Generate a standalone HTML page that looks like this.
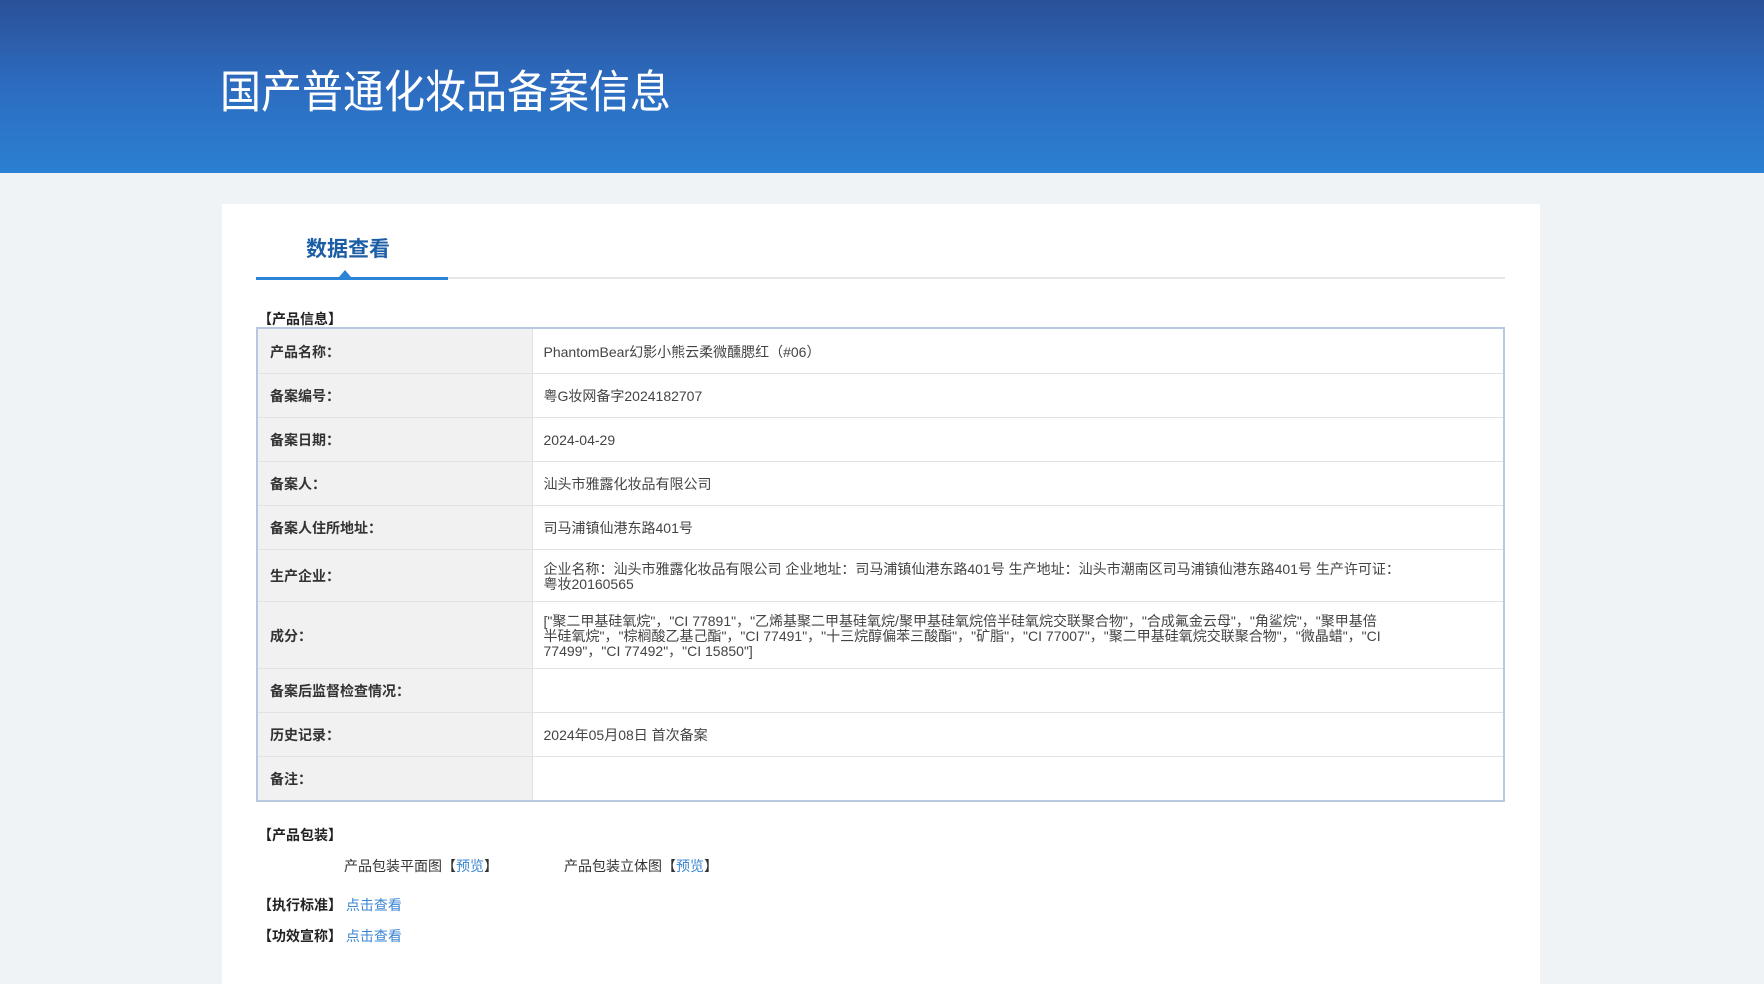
<!DOCTYPE html>
<html><head><meta charset="utf-8"><style>
*{margin:0;padding:0;box-sizing:border-box}
body{width:1764px;height:962px;overflow:hidden;background:#eff3f6;font-family:"Liberation Sans","Noto Sans CJK SC",sans-serif;color:#333;position:relative}
.hd{position:absolute;left:0;top:0;width:1764px;height:173px;background:linear-gradient(180deg,#2a5198 0%,#2d6cc0 50%,#2a80d2 100%)}
.hd .t{position:absolute;left:220px;top:64px;font-size:41px;color:#fff;line-height:56px;transform:scaleY(1.1);transform-origin:left center}
.card{position:absolute;left:222px;top:204px;width:1318px;height:780px;background:#fff}
.tab{position:absolute;left:306px;top:233px;font-size:21px;font-weight:bold;color:#1c5ea5}
.gl{position:absolute;left:256px;top:277px;width:1249px;height:2px;background:#e6e6e6}
.bl{position:absolute;left:256px;top:277px;width:192px;height:3px;background:#2a85d6}
.tri{position:absolute;left:339px;top:270px;width:0;height:0;border-left:6px solid transparent;border-right:6px solid transparent;border-bottom:7px solid #2a85d6}
.sec{position:absolute;left:258px;font-size:14px;font-weight:bold;color:#222}
table{position:absolute;left:256px;top:327px;width:1249px;border-collapse:collapse;border:2px solid #b8c8e0;font-size:14px}
td{border-bottom:1px solid #e2e2e2;vertical-align:middle;line-height:15px}
td.l{width:275px;background:#f1f1f1;font-weight:bold;padding-left:12px;color:#333;border-right:1px solid #e2e2e2;padding-top:3px}
td.v{padding-left:11px;padding-right:60px;color:#444;padding-top:3px}
.a{color:#3a86d4}
.s{position:absolute;font-size:14px;color:#333}
</style></head><body>
<div class="hd"><div class="t">国产普通化妆品备案信息</div></div>
<div class="card"></div>
<div class="tab">数据查看</div>
<div class="gl"></div><div class="bl"></div><div class="tri"></div>
<div class="sec" style="top:309px">【产品信息】</div>
<table>
<tr style="height:45px"><td class="l">产品名称：</td><td class="v">PhantomBear幻影小熊云柔微醺腮红（#06）</td></tr>
<tr style="height:44px"><td class="l">备案编号：</td><td class="v">粤G妆网备字2024182707</td></tr>
<tr style="height:44px"><td class="l">备案日期：</td><td class="v">2024-04-29</td></tr>
<tr style="height:44px"><td class="l">备案人：</td><td class="v">汕头市雅露化妆品有限公司</td></tr>
<tr style="height:44px"><td class="l">备案人住所地址：</td><td class="v">司马浦镇仙港东路401号</td></tr>
<tr style="height:52px"><td class="l">生产企业：</td><td class="v">企业名称：汕头市雅露化妆品有限公司 企业地址：司马浦镇仙港东路401号 生产地址：汕头市潮南区司马浦镇仙港东路401号 生产许可证：<br>粤妆20160565</td></tr>
<tr style="height:67px"><td class="l">成分：</td><td class="v">["聚二甲基硅氧烷"，"CI 77891"，"乙烯基聚二甲基硅氧烷/聚甲基硅氧烷倍半硅氧烷交联聚合物"，"合成氟金云母"，"角鲨烷"，"聚甲基倍<br>半硅氧烷"，"棕榈酸乙基己酯"，"CI 77491"，"十三烷醇偏苯三酸酯"，"矿脂"，"CI 77007"，"聚二甲基硅氧烷交联聚合物"，"微晶蜡"，"CI<br>77499"，"CI 77492"，"CI 15850"]</td></tr>
<tr style="height:44px"><td class="l">备案后监督检查情况：</td><td class="v"></td></tr>
<tr style="height:44px"><td class="l">历史记录：</td><td class="v">2024年05月08日 首次备案</td></tr>
<tr style="height:45px"><td class="l">备注：</td><td class="v"></td></tr>
</table>
<div class="sec" style="top:825px">【产品包装】</div>
<div class="s" style="left:344px;top:856px">产品包装平面图【<span class="a">预览</span>】</div>
<div class="s" style="left:564px;top:856px">产品包装立体图【<span class="a">预览</span>】</div>
<div class="sec" style="top:895px">【执行标准】 <span class="a" style="font-weight:normal">点击查看</span></div>
<div class="sec" style="top:926px">【功效宣称】 <span class="a" style="font-weight:normal">点击查看</span></div>
</body></html>
